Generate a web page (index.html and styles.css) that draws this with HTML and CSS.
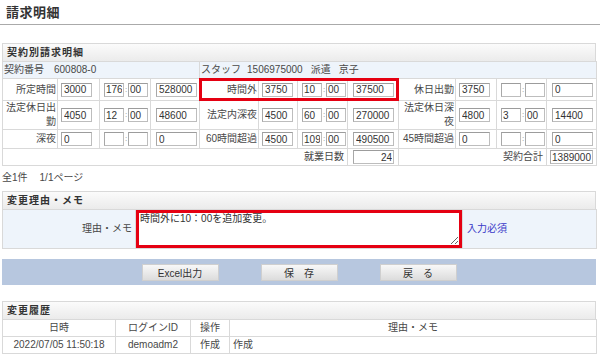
FILE: index.html
```html
<!DOCTYPE html>
<html lang="ja">
<head>
    <meta charset="UTF-8">
    <meta name="viewport" content="width=device-width, initial-scale=1.0">
    <title>請求明細</title>
    <link rel="stylesheet" href="styles.css">
</head>
<body>
    <h1 class="page-title">請求明細</h1>

    <div class="panel panel-contract">
        <div class="panel-head">契約別請求明細</div>
        <table class="bill">
            <colgroup>
                <col style="width:55px"><col style="width:42px"><col style="width:51px"><col style="width:49px">
                <col style="width:59px"><col style="width:39px"><col style="width:50px"><col style="width:51px">
                <col style="width:57px"><col style="width:41px"><col style="width:50px"><col style="width:50px">
            </colgroup>
            <tr class="info">
                <td colspan="4">契約番号<span class="sp-a">600808-0</span></td>
                <td colspan="8">スタッフ<span class="sp-b">1506975000</span><span class="sp-c">派遣</span><span class="sp-d">京子</span></td>
            </tr>
            <tr class="r1">
                <th>所定時間</th>
                <td><input class="num" value="3000"></td>
                <td class="time"><input value="176"><span class="colon">:</span><input value="00"></td>
                <td><input class="amt" value="528000"></td>
                <th>時間外</th>
                <td><input class="num" value="3750"></td>
                <td class="time"><input value="10"><span class="colon">:</span><input value="00"></td>
                <td><input class="amt" value="37500"></td>
                <th>休日出勤</th>
                <td><input class="num" value="3750"></td>
                <td class="time"><input value=""><span class="colon">:</span><input value=""></td>
                <td><input class="amt" value="0"></td>
            </tr>
            <tr class="r2">
                <th>法定休日出勤</th>
                <td><input class="num" value="4050"></td>
                <td class="time"><input value="12"><span class="colon">:</span><input value="00"></td>
                <td><input class="amt" value="48600"></td>
                <th>法定内深夜</th>
                <td><input class="num" value="4500"></td>
                <td class="time"><input value="60"><span class="colon">:</span><input value="00"></td>
                <td><input class="amt" value="270000"></td>
                <th>法定休日深夜</th>
                <td><input class="num" value="4800"></td>
                <td class="time"><input value="3"><span class="colon">:</span><input value="00"></td>
                <td><input class="amt" value="14400"></td>
            </tr>
            <tr class="r3">
                <th>深夜</th>
                <td><input class="num" value="0"></td>
                <td class="time"><input value=""><span class="colon">:</span><input value=""></td>
                <td><input class="amt" value="0"></td>
                <th>60時間超過</th>
                <td><input class="num" value="4500"></td>
                <td class="time"><input value="109"><span class="colon">:</span><input value="00"></td>
                <td><input class="amt" value="490500"></td>
                <th>45時間超過</th>
                <td><input class="num" value="0"></td>
                <td class="time"><input value=""><span class="colon">:</span><input value=""></td>
                <td><input class="amt" value="0"></td>
            </tr>
            <tr class="r4">
                <th colspan="7">就業日数</th>
                <td><input class="amt right" value="24"></td>
                <th colspan="3">契約合計</th>
                <td><input class="amt wide" value="1389000"></td>
            </tr>
        </table>
        <div class="mark mark-overtime"></div>
    </div>

    <div class="pager">全1件<span class="pages">1/1ページ</span></div>

    <div class="panel">
        <div class="panel-head">変更理由・メモ</div>
        <table class="memo">
            <colgroup>
                <col style="width:133px"><col style="width:327px"><col style="width:134px">
            </colgroup>
            <tr>
                <th>理由・メモ</th>
                <td class="memo-field"><textarea>時間外に10：00を追加変更。</textarea></td>
                <td class="memo-note">入力必須</td>
            </tr>
        </table>
    </div>

    <div class="button-bar">
        <button class="btn">Excel出力</button>
        <button class="btn">保　存</button>
        <button class="btn">戻　る</button>
    </div>

    <div class="panel panel-history">
        <div class="panel-head">変更履歴</div>
        <table class="history">
            <colgroup>
                <col style="width:113px"><col style="width:75px"><col style="width:39px"><col style="width:367px">
            </colgroup>
            <tr>
                <th>日時</th>
                <th>ログインID</th>
                <th>操作</th>
                <th>理由・メモ</th>
            </tr>
            <tr>
                <td class="center">2022/07/05 11:50:18</td>
                <td class="center">demoadm2</td>
                <td class="center">作成</td>
                <td>作成</td>
            </tr>
        </table>
    </div>
</body>
</html>
```

FILE: styles.css
```css
:root {
    --text: #484848;
    --line: #d9d9d9;
    --head-top: #fbfbfb;
    --head-bottom: #ebebeb;
    --pale-blue: #eef4fb;
    --bar-blue: #b7c7df;
    --mark-red: #e50012;
    --link: #3a3ac8;
}

* {
    box-sizing: border-box;
}

body {
    margin: 0;
    width: 600px;
    font-family: "Liberation Sans", "Noto Sans CJK JP", sans-serif;
    font-size: 10px;
    color: var(--text);
    background: #fff;
}

.page-title {
    margin: 0;
    padding: 4px 6px 0;
    height: 25px;
    font-size: 13px;
    line-height: 18px;
    font-weight: bold;
    color: #333;
    letter-spacing: 0.5px;
    border-bottom: 1px solid #aaa;
}

/* panels */
.panel {
    position: relative;
    margin: 0 4px 0 2px;
}

.panel-contract {
    margin-top: 18px;
}

.panel-head {
    height: 18px;
    line-height: 17px;
    padding-left: 4px;
    font-weight: bold;
    letter-spacing: 1px;
    color: #333;
    background: linear-gradient(var(--head-top), var(--head-bottom));
    border: 1px solid var(--line);
    border-bottom: none;
}

table {
    width: 100%;
    border-collapse: collapse;
    table-layout: fixed;
}

td, th {
    border: 1px solid var(--line);
    padding: 0 3px;
    font-weight: normal;
    line-height: 14px;
}

/* contract table */
.bill th {
    text-align: right;
    padding: 0 1px;
}

.bill .info td {
    height: 17px;
    background: var(--pale-blue);
    padding-left: 1px;
}

.bill .r1 td, .bill .r1 th { height: 22px; }
.bill .r2 td, .bill .r2 th { height: 28px; line-height: 14px; }
.bill .r3 td, .bill .r3 th { height: 19px; }
.bill .r4 td, .bill .r4 th { height: 17px; }

.bill .r4 th {
    padding-right: 3px;
}

.sp-a { margin-left: 10px; }
.sp-b { margin-left: 6px; }
.sp-c { margin-left: 8px; }
.sp-d { margin-left: 8px; }

.bill input {
    margin: 0;
    height: 14px;
    padding: 0 2px;
    font: 10px "Liberation Sans", sans-serif;
    color: #333;
    border: 1px solid #bdbdbd;
    border-top-color: #9c9c9c;
    border-left-color: #a8a8a8;
    background: #fff;
    vertical-align: middle;
}

.bill .num {
    width: 31px;
}

.bill .amt {
    width: 41px;
    margin-left: 2px;
    padding: 0 1px 0 2px;
}

.bill .wide {
    width: 43px;
    margin-left: 0;
    padding: 0 1px;
}

.bill .right {
    text-align: right;
}

.bill .time {
    padding-left: 4px;
    white-space: nowrap;
}

.bill .time input {
    width: 20px;
    padding: 0 1px;
}

.colon {
    display: inline-block;
    width: 4px;
    text-align: center;
    font-size: 8px;
    color: #888;
    vertical-align: middle;
}

.mark {
    position: absolute;
    border: 3px solid var(--mark-red);
    pointer-events: none;
}

.mark-overtime {
    left: 197px;
    top: 35px;
    width: 200px;
    height: 23px;
}

.pager {
    height: 25px;
    padding: 5px 2px 0;
    line-height: 14px;
}

.pages {
    margin-left: 12px;
}

/* memo */
.memo th {
    height: 38px;
    text-align: right;
    background: var(--pale-blue);
}

.memo-field {
    padding: 0;
}

.memo-field textarea {
    display: block;
    width: 100%;
    height: 38px;
    margin: 0;
    padding: 0 1px;
    border: 3px solid var(--mark-red);
    font: 10px "Liberation Sans", "Noto Sans CJK JP", sans-serif;
    line-height: 11px;
    color: #333;
    resize: both;
}

.memo-note {
    background: var(--pale-blue);
    color: var(--link);
    padding-left: 4px;
}

/* buttons */
.button-bar {
    display: flex;
    justify-content: center;
    align-items: center;
    gap: 42px;
    height: 26px;
    margin: 10px 4px 0 2px;
    background: var(--bar-blue);
}

.btn {
    width: 77px;
    height: 17px;
    padding: 0;
    font: 10px "Liberation Sans", "Noto Sans CJK JP", sans-serif;
    color: #333;
    border: 1px solid #cfcfcf;
    background: linear-gradient(#f8f8f8, #dcdcdc);
}

/* history */
.panel-history {
    margin-top: 16px;
}

.history th {
    height: 17px;
    text-align: center;
    background: #fff;
}

.history td {
    height: 17px;
}

.history .center {
    text-align: center;
}
```
